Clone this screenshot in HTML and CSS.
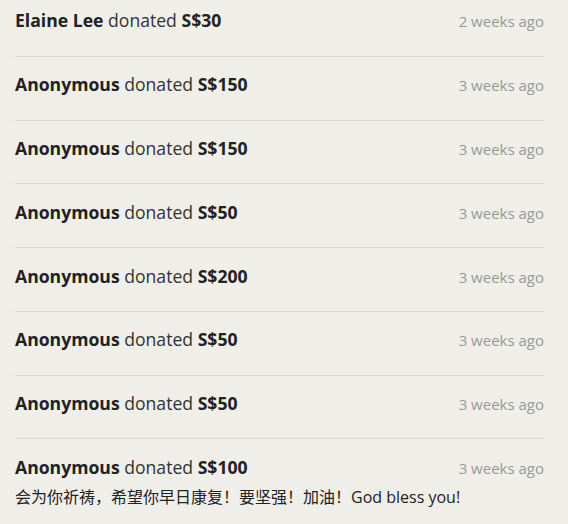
FILE: index.html
```html
<!DOCTYPE html>
<html lang="en">
<head>
  <meta charset="UTF-8">
  <title>Donations</title>
  <link rel="stylesheet" href="styles.css">
</head>
<body>
  <ul class="donation-list">
    <li class="donation">
      <div class="donation-line">
        <span class="donation-text"><strong>Elaine Lee</strong> donated <strong>S$30</strong></span>
        <span class="donation-time">2 weeks ago</span>
      </div>
    </li>
    <li class="donation">
      <div class="donation-line">
        <span class="donation-text"><strong>Anonymous</strong> donated <strong>S$150</strong></span>
        <span class="donation-time">3 weeks ago</span>
      </div>
    </li>
    <li class="donation">
      <div class="donation-line">
        <span class="donation-text"><strong>Anonymous</strong> donated <strong>S$150</strong></span>
        <span class="donation-time">3 weeks ago</span>
      </div>
    </li>
    <li class="donation">
      <div class="donation-line">
        <span class="donation-text"><strong>Anonymous</strong> donated <strong>S$50</strong></span>
        <span class="donation-time">3 weeks ago</span>
      </div>
    </li>
    <li class="donation">
      <div class="donation-line">
        <span class="donation-text"><strong>Anonymous</strong> donated <strong>S$200</strong></span>
        <span class="donation-time">3 weeks ago</span>
      </div>
    </li>
    <li class="donation">
      <div class="donation-line">
        <span class="donation-text"><strong>Anonymous</strong> donated <strong>S$50</strong></span>
        <span class="donation-time">3 weeks ago</span>
      </div>
    </li>
    <li class="donation">
      <div class="donation-line">
        <span class="donation-text"><strong>Anonymous</strong> donated <strong>S$50</strong></span>
        <span class="donation-time">3 weeks ago</span>
      </div>
    </li>
    <li class="donation">
      <div class="donation-line">
        <span class="donation-text"><strong>Anonymous</strong> donated <strong>S$100</strong></span>
        <span class="donation-time">3 weeks ago</span>
      </div>
      <p class="donation-message">会为你祈祷，希望你早日康复！要坚强！加油！God bless you!</p>
    </li>
  </ul>
</body>
</html>
```

FILE: styles.css
```css
:root {
  --bg: #f0eee9;
  --text: #222222;
  --text-muted: #999999;
  --border: #d9d7d2;
}

* {
  margin: 0;
  padding: 0;
  box-sizing: border-box;
}

body {
  background: var(--bg);
  color: var(--text);
  font-family: "Open Sans", "Noto Sans CJK SC", sans-serif;
  padding: 0 24px 0 15px;
  overflow: hidden;
}

.donation-list {
  list-style: none;
  margin-top: -7px;
}

.donation {
  padding: 14.4px 0 21.4px;
  border-bottom: 1px solid var(--border);
}

.donation-line {
  display: flex;
  justify-content: space-between;
  align-items: baseline;
  height: 27px;
  line-height: 27px;
}

.donation-text {
  font-size: 17.6px;
  color: #333333;
}

.donation-text strong {
  font-weight: 700;
  color: var(--text);
}

.donation-time {
  font-size: 15px;
  color: var(--text-muted);
}

.donation-message {
  font-size: 16px;
  line-height: 24px;
  margin-top: 4px;
  color: var(--text);
}
```
